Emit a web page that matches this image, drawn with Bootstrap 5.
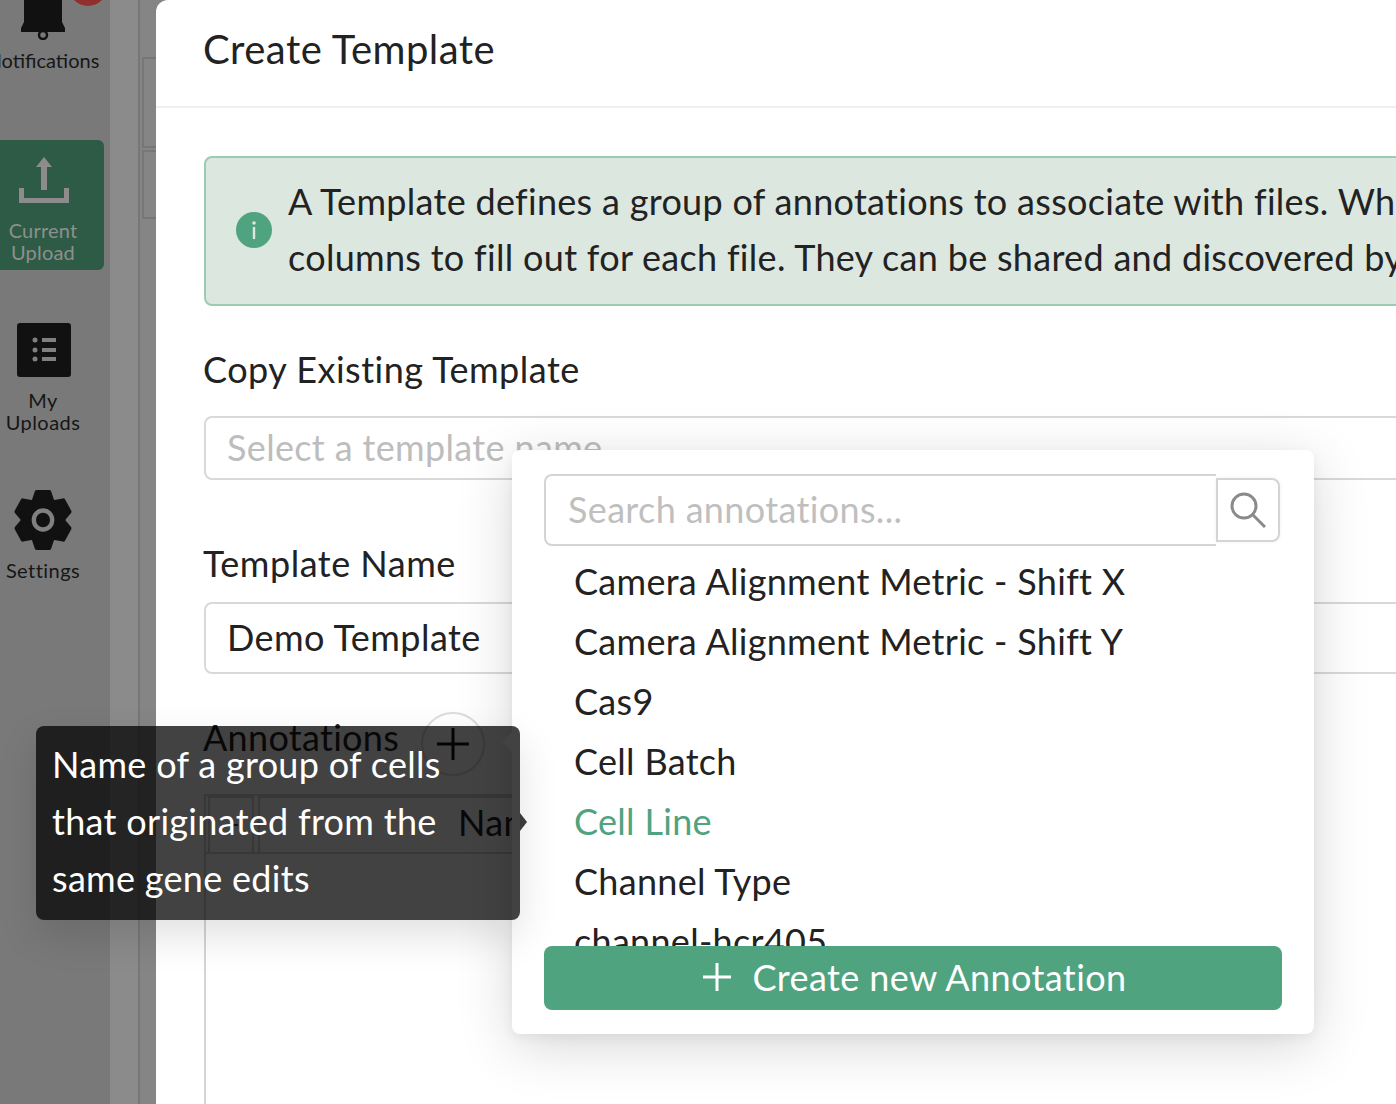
<!DOCTYPE html>
<html lang="en">

<head>
    <meta charset="UTF-8">
    <meta name="viewport" content="width=device-width, initial-scale=1.0">
    <title>Create Template</title>
    <link href="https://cdn.jsdelivr.net/npm/bootstrap@5.3.0/dist/css/bootstrap.min.css" rel="stylesheet">
    <style>
        html, body {
            height: 1104px;
            overflow: hidden;
        }

        body {
            font-family: Lato, "Noto Sans", sans-serif;
            color: #222;
            background-color: #858585;
            position: relative;
            letter-spacing: .3px;
        }

        .shell {
            height: 1104px;
            width: 1900px;
        }

        /* left nav */
        .side-nav {
            width: 110px;
            background-color: #797979;
            flex: none;
            color: #161616;
            font-size: 20px;
            line-height: 22px;
            letter-spacing: .45px;
            text-align: center;
        }

        .side-item {
            width: 122px;
            margin-left: -18px;
            position: relative;
        }

        .side-item svg {
            display: block;
            margin: 0 auto;
        }

        .item-bell {
            margin-top: -22px;
            height: 162px;
        }

        .item-bell span {
            display: block;
            margin-top: 9px;
            letter-spacing: 0;
        }

        .bell-badge {
            position: absolute;
            left: 87px;
            top: -10px;
            width: 38px;
            height: 38px;
            border-radius: 50%;
            background-color: #8f302c;
        }

        .item-current {
            height: 130px;
            background-color: #2d5b46;
            border-radius: 6px;
            color: #8f8f8f;
            padding-top: 15px;
            letter-spacing: .2px;
        }

        .item-current span {
            display: block;
            margin-top: 16px;
        }

        .item-uploads {
            margin-top: 53px;
        }

        .item-uploads span {
            display: block;
            margin-top: 12px;
        }

        .item-settings {
            margin-top: 57px;
        }

        .item-settings span {
            display: block;
            margin-top: 9px;
        }

        .side-strip {
            width: 28px;
            flex: none;
            background-color: #8b8b8b;
            border-right: 2px solid #777;
            box-sizing: content-box;
        }

        .back-panel {
            width: 16px;
            flex: none;
            padding-top: 57px;
        }

        .back-box {
            margin-left: 2px;
            border: 2px solid #777;
            border-right: 0;
        }

        .back-box-a {
            height: 91px;
        }

        .back-box-b {
            height: 69px;
            margin-top: 2px;
        }

        /* dialog */
        .dialog-panel {
            width: 1744px;
            flex: none;
            background-color: #fff;
            border-top-left-radius: 12px;
        }

        .dialog-head {
            height: 108px;
            padding-left: 47px;
            padding-bottom: 8px;
            border-bottom: 2px solid #efefef;
            font-size: 40px;
            letter-spacing: .47px;
        }

        .dialog-body {
            padding: 48px 48px 0;
        }

        .info-box {
            height: 150px;
            padding: 15px 0 19px 30px;
            margin: 0;
            background-color: #dce7e0;
            border: 2px solid #9accb3;
            border-radius: 8px;
            color: #222;
            font-size: 36px;
            line-height: 56px;
            white-space: nowrap;
        }

        .info-dot {
            width: 36px;
            height: 36px;
            flex: none;
            margin-right: 16px;
            margin-top: 2px;
            background-color: #4fa37f;
            border-radius: 50%;
        }

        .field-label {
            font-size: 36px;
            letter-spacing: .5px;
            line-height: 46px;
            height: 48px;
            margin: 0 0 0 -1px;
            color: #222;
        }

        .field-box.form-control {
            border: 2px solid #d9d9d9;
            border-radius: 8px;
            font-size: 36px;
            letter-spacing: .45px;
            color: #222;
            padding: 0 21px 2px;
        }

        .field-box.form-control::placeholder {
            color: #bdbdbd;
            letter-spacing: .35px;
        }

        .label-copy {
            margin-top: 40px;
            margin-bottom: 22px;
        }

        .input-copy {
            height: 64px;
        }

        .label-name {
            margin-top: 60px;
            margin-bottom: 14px;
        }

        .input-name {
            height: 72px;
        }

        .annot-row {
            margin-top: 38px;
            height: 68px;
        }

        .annot-row .field-label {
            margin-top: 2px;
            letter-spacing: .3px;
        }

        .annot-add {
            width: 64px;
            height: 64px;
            margin-left: 22px;
            border: 2px solid #ddd;
            border-radius: 50%;
            background-color: #fff;
            padding: 0;
        }

        .grid-box {
            width: 1000px;
            margin-top: 14px;
            height: 320px;
            border: 2px solid #d4d4d4;
            border-bottom: 0;
            border-right: 0;
        }

        .grid-head {
            height: 58px;
            border-bottom: 2px solid #d4d4d4;
            padding-left: 2px;
        }

        .grid-cell-a {
            width: 46px;
            border: 2px solid #d4d4d4;
            border-bottom: 0;
            margin-right: 4px;
        }

        .grid-cell-a::after {
            content: "";
            width: 14px;
            height: 2px;
            background-color: #444;
        }

        .grid-cell-b {
            flex: 1;
            border: 2px solid #d4d4d4;
            border-bottom: 0;
            padding-left: 198px;
            font-size: 36px;
            line-height: 49px;
        }

        /* annotation picker */
        .picker-pop {
            position: absolute;
            left: 512px;
            top: 450px;
            width: 802px;
            height: 584px;
            padding: 24px 32px;
            background-color: #fff;
            border-radius: 8px;
            box-shadow: 0 12px 56px rgba(0, 0, 0, .16), 0 4px 12px rgba(0, 0, 0, .05);
            z-index: 10;
        }

        .picker-pop::before {
            content: "";
            position: absolute;
            left: -7px;
            top: 285px;
            width: 14px;
            height: 14px;
            background-color: #fff;
            transform: rotate(45deg);
        }

        .picker-input.form-control {
            width: 672px;
            height: 72px;
            flex: none;
            border: 2px solid #d4d4d4;
            border-right: 0;
            border-radius: 8px 0 0 8px;
            font-size: 36px;
            letter-spacing: .35px;
            padding: 0 20px 2px 22px;
        }

        .picker-input.form-control::placeholder {
            color: #bfbfbf;
        }

        .picker-search {
            width: 64px;
            height: 64px;
            flex: none;
            padding: 0;
            background-color: #fff;
            border: 2px solid #d4d4d4;
            border-radius: 0 8px 8px 0;
            box-shadow: 0 0 4px rgba(0, 0, 0, .06);
        }

        .picker-list {
            height: 400px;
            margin-top: 6px;
            overflow: hidden;
            font-size: 36px;
        }

        .picker-list .list-group-item {
            flex: none;
            height: 60px;
            padding: 0 0 0 30px;
            line-height: 58px;
            border: 0;
            color: #222;
            white-space: nowrap;
        }

        .picker-list .list-group-item.picked {
            color: #4fa37f;
        }

        .picker-create.btn {
            width: 738px;
            height: 64px;
            margin-top: -6px;
            position: relative;
            gap: 21px;
            background-color: #4fa37f;
            border: 0;
            border-radius: 8px;
            color: #fff;
            font-size: 36px;
            letter-spacing: .4px;
            line-height: 60px;
            padding: 0 0 2px 4px;
        }

        /* tooltip */
        .tip-box {
            position: absolute;
            left: 36px;
            top: 726px;
            width: 484px;
            height: 194px;
            padding: 10px 16px;
            background-color: rgba(0, 0, 0, .74);
            border-radius: 8px;
            color: #fff;
            font-size: 36px;
            line-height: 57px;
            white-space: nowrap;
            box-shadow: 0 16px 40px rgba(0, 0, 0, .12);
            z-index: 20;
        }

        .tip-box::after {
            content: "";
            position: absolute;
            right: -7px;
            top: 87px;
            border-top: 9px solid transparent;
            border-bottom: 9px solid transparent;
            border-left: 7px solid #3a3a3a;
        }
    </style>
</head>

<body>
    <div class="shell d-flex">
        <nav class="side-nav">
            <div class="side-item item-bell">
                <svg width="46" height="62" viewBox="0 0 46 62">
                    <path fill="#111" d="M5 0H43V44L46 50V54H2V50L5 44Z" transform="translate(-1 0)" />
                    <circle cx="23" cy="57" r="4" fill="none" stroke="#111" stroke-width="2.500" />
                </svg>
                <div class="bell-badge"></div>
                <span>Notifications</span>
            </div>
            <div class="side-item item-current">
                <svg width="52" height="48" viewBox="0 0 52 48" fill="#8c8c8c">
                    <path d="M27 2L35 12H30V35H24V12H19Z" />
                    <path d="M2 33H7V43H47V33H52V48H2Z" />
                </svg>
                <span>Current<br>Upload</span>
            </div>
            <div class="side-item item-uploads">
                <svg width="56" height="54" viewBox="-2 0 56 54">
                    <rect width="54" height="54" rx="3" fill="#111" />
                    <g fill="#808080">
                        <circle cx="18" cy="17" r="2.500" />
                        <circle cx="18" cy="27" r="2.500" />
                        <circle cx="18" cy="36" r="2.500" />
                        <rect x="25" y="15" width="14" height="4" />
                        <rect x="25" y="25" width="14" height="4" />
                        <rect x="25" y="34" width="14" height="4" />
                    </g>
                </svg>
                <span>My<br>Uploads</span>
            </div>
            <div class="side-item item-settings">
                <svg width="58" height="60" viewBox="-30 -30 60 60" preserveAspectRatio="none">
                    <circle r="22" fill="#111" />
                    <g fill="#111" stroke="#111" stroke-width="4" stroke-linejoin="round">
                        <path d="M-6.500 -28H6.500L10 -18H-10Z" />
                        <path d="M-6.500 -28H6.500L10 -18H-10Z" transform="rotate(60)" />
                        <path d="M-6.500 -28H6.500L10 -18H-10Z" transform="rotate(120)" />
                        <path d="M-6.500 -28H6.500L10 -18H-10Z" transform="rotate(180)" />
                        <path d="M-6.500 -28H6.500L10 -18H-10Z" transform="rotate(240)" />
                        <path d="M-6.500 -28H6.500L10 -18H-10Z" transform="rotate(300)" />
                    </g>
                    <circle r="9.500" fill="#111" stroke="#808080" stroke-width="4.500" />
                </svg>
                <span>Settings</span>
            </div>
        </nav>
        <div class="side-strip"></div>
        <div class="back-panel">
            <div class="back-box back-box-a"></div>
            <div class="back-box back-box-b"></div>
        </div>

        <main class="dialog-panel">
            <div class="dialog-head d-flex align-items-center">Create Template</div>
            <div class="dialog-body">
                <div class="info-box alert d-flex align-items-center">
                    <div class="info-dot d-flex align-items-center justify-content-center">
                        <svg width="6" height="18" viewBox="0 0 6 18" fill="#dce7e0">
                            <circle cx="3" cy="2" r="1.800" />
                            <rect x="1.800" y="6" width="2.400" height="12" />
                        </svg>
                    </div>
                    <div>A Template defines a group of annotations to associate with files. When uploading, annotations become<br>columns to fill out for each file. They can be shared and discovered by other members of your organization.</div>
                </div>

                <div class="field-label label-copy">Copy Existing Template</div>
                <input class="field-box input-copy form-control" type="text" placeholder="Select a template name">

                <div class="field-label label-name">Template Name</div>
                <input class="field-box input-name form-control" type="text" value="Demo Template">

                <div class="annot-row d-flex">
                    <div class="field-label">Annotations</div>
                    <button class="annot-add d-flex align-items-center justify-content-center" type="button">
                        <svg width="32" height="32" viewBox="0 0 32 32" stroke="#111" stroke-width="3">
                            <path d="M16 0V32M0 16H32" />
                        </svg>
                    </button>
                </div>

                <div class="grid-box">
                    <div class="grid-head d-flex">
                        <div class="grid-cell-a d-flex align-items-center justify-content-center"></div>
                        <div class="grid-cell-b">Name</div>
                    </div>
                </div>
            </div>
        </main>
    </div>

    <div class="picker-pop">
        <div class="d-flex align-items-center">
            <input class="picker-input form-control" type="text" placeholder="Search annotations...">
            <button class="picker-search d-flex align-items-center justify-content-center" type="button">
                <svg width="36" height="36" viewBox="0 0 36 36" fill="none" stroke="#8a8a8a" stroke-width="3">
                    <circle cx="14" cy="14" r="12" />
                    <path d="M22.500 22.500L35 35" />
                </svg>
            </button>
        </div>
        <div class="picker-list list-group list-group-flush">
            <div class="list-group-item">Camera Alignment Metric - Shift X</div>
            <div class="list-group-item">Camera Alignment Metric - Shift Y</div>
            <div class="list-group-item">Cas9</div>
            <div class="list-group-item">Cell Batch</div>
            <div class="list-group-item picked">Cell Line</div>
            <div class="list-group-item">Channel Type</div>
            <div class="list-group-item">channel-hcr405</div>
        </div>
        <button class="picker-create btn d-flex align-items-center justify-content-center" type="button">
            <svg width="28" height="28" viewBox="0 0 28 28" stroke="#fff" stroke-width="3">
                <path d="M14 0V28M0 14H28" />
            </svg>
            <span>Create new Annotation</span>
        </button>
    </div>

    <div class="tip-box">Name of a group of cells<br>that originated from the<br>same gene edits</div>

    <script src="https://cdn.jsdelivr.net/npm/bootstrap@5.3.0/dist/js/bootstrap.bundle.min.js"></script>
</body>

</html>
